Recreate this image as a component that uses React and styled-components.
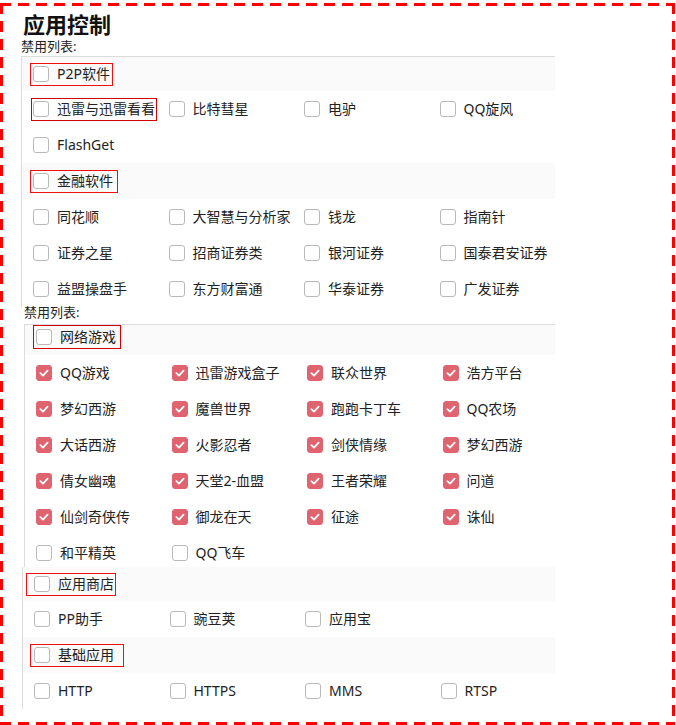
import React from 'react'
import styled, { createGlobalStyle, css } from 'styled-components'

const GlobalStyle = createGlobalStyle`
  html, body { margin:0; padding:0; background:#fff; }
  body {
    font-family:"Noto Sans", "Noto Sans CJK SC", sans-serif;
    color:#222;
  }
`

const dashH = 'repeating-linear-gradient(90deg, #ff0000 0 11px, transparent 11px 18px)'
const dashV = 'repeating-linear-gradient(180deg, #ff0000 0 11px, transparent 11px 18px)'

const Page = styled.div`
  box-sizing:border-box;
  width:675px;
  height:722px;
  margin-top:3px;
  padding:6px 0 0 21px;
  background:
    ${dashH} left top / 100% 3px no-repeat,
    ${dashH} left bottom / 100% 3px no-repeat,
    ${dashV} left top / 3px 100% no-repeat,
    ${dashV} right top / 3px 100% no-repeat;
`

const Title = styled.h1`
  margin:1px 0 0 2px;
  font-family:"Noto Sans CJK SC", sans-serif;
  font-size:22px;
  line-height:26px;
  font-weight:700;
  color:#111;
`

const Content = styled.div`
  width:534px;
`

const Section = styled.div`
  margin-left:${p => p.$indent || 0}px;
`

const Caption = styled.div`
  font-size:13px;
  line-height:17px;
  margin:${p => p.$top || 1}px 0 ${p => p.$gap || 1}px;
  color:#222;
`

const Panel = styled.div`
  border-left:1px solid #dcdcdc;
  border-top:${p => (p.$top ? '1px solid #dcdcdc' : 'none')};
`

const GroupHead = styled.div`
  box-sizing:border-box;
  height:${p => p.$h}px;
  background:#fafafa;
  display:flex;
  align-items:${p => (p.$align === 'top' ? 'flex-start' : 'center')};
  padding-left:11px;
`

const ItemGrid = styled.div`
  display:grid;
  grid-template-columns:repeat(4, 135.5px);
  grid-auto-rows:36px;
  &:last-child { margin-bottom:-4px; }
`

const Cell = styled.div`
  display:flex;
  align-items:center;
  padding-left:11px;
`

const Option = styled.label`
  display:inline-flex;
  align-items:center;
  gap:8px;
  box-sizing:border-box;
  font-size:14px;
  line-height:20px;
  white-space:nowrap;
  color:#222;
  ${p => p.$box && css`
    height:${p.$box.h || 23}px;
    border:1px solid ${p.$box.color || '#ee1111'};
    margin-left:${-(p.$box.l + 1)}px;
    padding:0 ${p.$box.r}px 0 ${p.$box.l}px;
  `}
`

const Box = styled.span`
  box-sizing:border-box;
  flex:none;
  width:16px;
  height:16px;
  border-radius:3px;
  border:1px solid ${p => (p.$on ? '#e0646f' : '#b9b9b9')};
  background:${p => (p.$on ? '#e0646f' : '#fff')};
  display:inline-flex;
  align-items:center;
  justify-content:center;
`

const Check = ({ on, label, box }) => (
  <Option $box={box}>
    <Box $on={on}>
      {on && (
        <svg width="12" height="12" viewBox="0 0 12 12">
          <path d="M2.4 6.2 L5 8.6 L9.6 3.6" fill="none" stroke="#fff" strokeWidth="1.8" strokeLinecap="round" strokeLinejoin="round" />
        </svg>
      )}
    </Box>
    <span>{label}</span>
  </Option>
)

const Items = ({ list }) => (
  <ItemGrid>
    {list.map((it, i) => (
      <Cell key={i}>
        <Check label={it.name} on={it.on} box={it.box} />
      </Cell>
    ))}
  </ItemGrid>
)

const mk = (names, on = false) => names.map(name => ({ name, on }))

const p2p = [
  { name: '迅雷与迅雷看看', box: { l: 1, r: 1, color: '#d40000' } },
  ...mk(['比特彗星', '电驴', 'QQ旋风', 'FlashGet'])
]
const finance = mk([
  '同花顺', '大智慧与分析家', '钱龙', '指南针',
  '证券之星', '招商证券类', '银河证券', '国泰君安证券',
  '益盟操盘手', '东方财富通', '华泰证券', '广发证券'
])
const games = [
  ...mk([
    'QQ游戏', '迅雷游戏盒子', '联众世界', '浩方平台',
    '梦幻西游', '魔兽世界', '跑跑卡丁车', 'QQ农场',
    '大话西游', '火影忍者', '剑侠情缘', '梦幻西游',
    '倩女幽魂', '天堂2-血盟', '王者荣耀', '问道',
    '仙剑奇侠传', '御龙在天', '征途', '诛仙'
  ], true),
  ...mk(['和平精英', 'QQ飞车'])
]
const stores = mk(['PP助手', '豌豆荚', '应用宝'])
const basics = mk(['HTTP', 'HTTPS', 'MMS', 'RTSP'])

export default function App() {
  return (
    <>
      <GlobalStyle />
      <Page>
        <Title>应用控制</Title>
        <Content>
          <Section>
            <Caption $top={2}>禁用列表:</Caption>
            <Panel $top>
              <GroupHead $h={34}>
                <Check label="P2P软件" box={{ l: 2, r: 2 }} />
              </GroupHead>
              <Items list={p2p} />
              <GroupHead $h={36}>
                <Check label="金融软件" box={{ l: 2, r: 4 }} />
              </GroupHead>
              <Items list={finance} />
            </Panel>
          </Section>
          <Section $indent={3}>
            <Caption $gap={3}>禁用列表:</Caption>
            <Panel $top>
              <GroupHead $h={30} $align="top">
                <Check label="网络游戏" box={{ l: 2, r: 4, h: 24, color: '#d40000' }} />
              </GroupHead>
              <Items list={games} />
            </Panel>
          </Section>
          <Section $indent={1}>
            <Panel>
              <GroupHead $h={34}>
                <Check label="应用商店" box={{ l: 7, r: 1 }} />
              </GroupHead>
              <Items list={stores} />
              <GroupHead $h={36}>
                <Check label="基础应用" box={{ l: 3, r: 9 }} />
              </GroupHead>
              <Items list={basics} />
            </Panel>
          </Section>
        </Content>
      </Page>
    </>
  )
}
